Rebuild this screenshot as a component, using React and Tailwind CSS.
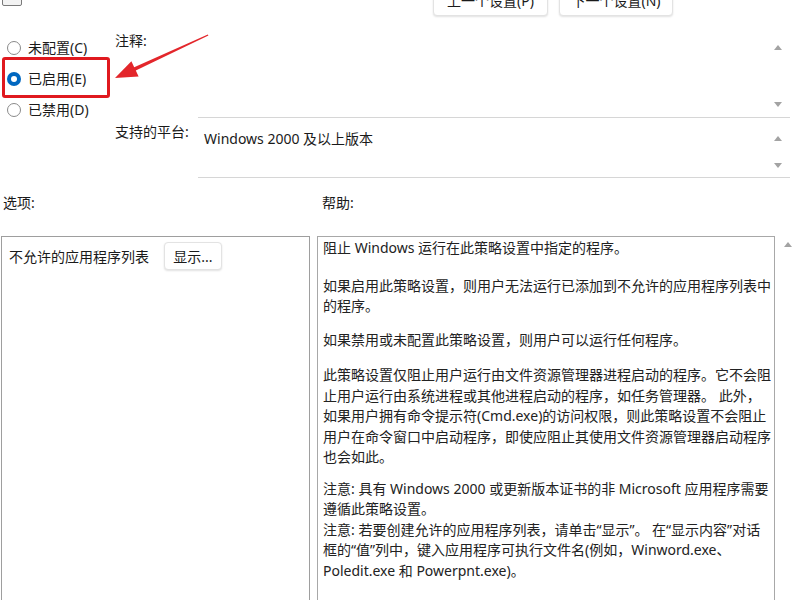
import React from 'react';

const Arrow = ({ down }) => (
  <svg width="8" height="5" viewBox="0 0 8 5" className="block">
    {down ? (
      <polygon points="0,0 8,0 4,5" fill="#a3a3a3" />
    ) : (
      <polygon points="0,5 8,5 4,0" fill="#a3a3a3" />
    )}
  </svg>
);

const Radio = ({ checked, label }) => (
  <div className="h-[31px] flex items-center pl-[7px] gap-[7px]">
    {checked ? (
      <span className="w-[14px] h-[14px] rounded-full bg-[#0067c0] flex items-center justify-center">
        <span className="w-[6px] h-[6px] rounded-full bg-white" />
      </span>
    ) : (
      <span className="w-[14px] h-[14px] rounded-full border border-[#8a8a8a] bg-white" />
    )}
    <span>{label}</span>
  </div>
);

// help text, line by line so the wrap matches the dialog
const helpParagraphs = [
  { mt: 'mt-0', lines: ['阻止 Windows 运行在此策略设置中指定的程序。'] },
  {
    mt: 'mt-[17px]',
    lines: ['如果启用此策略设置，则用户无法运行已添加到不允许的应用程序列表中', '的程序。'],
  },
  { mt: 'mt-[13px]', lines: ['如果禁用或未配置此策略设置，则用户可以运行任何程序。'] },
  {
    mt: 'mt-[15px]',
    lines: [
      '此策略设置仅阻止用户运行由文件资源管理器进程启动的程序。它不会阻',
      '止用户运行由系统进程或其他进程启动的程序，如任务管理器。 此外，',
      '如果用户拥有命令提示符(Cmd.exe)的访问权限，则此策略设置不会阻止',
      '用户在命令窗口中启动程序，即使应阻止其使用文件资源管理器启动程序',
      '也会如此。',
    ],
  },
  {
    mt: 'mt-[11px]',
    lines: ['注意: 具有 Windows 2000 或更新版本证书的非 Microsoft 应用程序需要', '遵循此策略设置。'],
  },
  {
    mt: 'mt-0',
    lines: [
      '注意: 若要创建允许的应用程序列表，请单击“显示”。 在“显示内容”对话',
      '框的“值”列中，键入应用程序可执行文件名(例如，Winword.exe、',
      'Poledit.exe 和 Powerpnt.exe)。',
    ],
  },
];

export default function App() {
  return (
    <div className="w-[800px] h-[600px] overflow-hidden bg-white relative flex flex-col font-['Noto_Sans','Noto_Sans_CJK_SC',sans-serif] text-[14px] text-[#1a1a1a]">
      {/* top strip, cut off by the window edge */}
      <div className="h-[25px] shrink-0 flex items-start">
        <div className="ml-[2px] -mt-[10px] w-[20px] h-[16px] border border-[#7a7a7a] rounded-[2px] bg-[#f3f3f3]" />
        <div className="ml-[411px] -mt-[16px] flex gap-[11px]">
          <button className="w-[115px] h-[32px] bg-white border border-[#e3e3e3] rounded-[4px] shadow-[0_1px_2px_rgba(0,0,0,0.12)] leading-[32px]">
            上一个设置(P)
          </button>
          <button className="w-[114px] h-[32px] bg-white border border-[#e3e3e3] rounded-[4px] shadow-[0_1px_2px_rgba(0,0,0,0.12)] leading-[32px]">
            下一个设置(N)
          </button>
        </div>
      </div>

      {/* state + comment + platform */}
      <div className="h-[155px] shrink-0 flex">
        <div className="w-[113px] pt-[7px] flex flex-col">
          <Radio label="未配置(C)" />
          <Radio checked label="已启用(E)" />
          <Radio label="已禁用(D)" />
        </div>
        <div className="flex-1 pr-[10px] flex flex-col">
          <div className="h-[93px] flex">
            <div className="w-[85px] pl-[2px] pt-[5px]">注释:</div>
            <div className="flex-1 border-b border-[#d6d6d6] flex flex-col items-end justify-between pr-[8px] pt-[20px] pb-[10px]">
              <Arrow />
              <Arrow down />
            </div>
          </div>
          <div className="h-[60px] flex">
            <div className="w-[85px] pl-[2px] pt-[3px]">支持的平台:</div>
            <div className="flex-1 border-b border-[#d6d6d6] flex">
              <div className="flex-1 pl-[6px] pt-[10px]">Windows 2000 及以上版本</div>
              <div className="flex flex-col items-end justify-between pr-[8px] pt-[18px] pb-[9px]">
                <Arrow />
                <Arrow down />
              </div>
            </div>
          </div>
        </div>
      </div>

      {/* section labels */}
      <div className="h-[56px] shrink-0 flex">
        <div className="w-[319px] pl-[3px] pt-[12px]">选项:</div>
        <div className="pl-[3px] pt-[12px]">帮助:</div>
      </div>

      {/* options + help */}
      <div className="flex-1 flex">
        <div className="ml-[1px] w-[309px] h-[420px] border border-[#9e9e9e] pt-[5px] pl-[7px]">
          <div className="flex items-center">
            <span>不允许的应用程序列表</span>
            <button className="ml-[15px] w-[58px] h-[28px] bg-white border border-[#e3e3e3] rounded-[4px] shadow-[0_1px_2px_rgba(0,0,0,0.12)]">
              显示...
            </button>
          </div>
        </div>
        <div className="ml-[7px] w-[458px] h-[420px] border border-[#a8a8a8] pl-[5px] pt-[1px] overflow-hidden text-[#222]">
          {helpParagraphs.map((p, i) => (
            <div key={i} className={p.mt}>
              {p.lines.map((line, j) => (
                <div key={j} className="leading-[20.5px] whitespace-nowrap">
                  {line}
                </div>
              ))}
            </div>
          ))}
        </div>
        <div className="flex-1 flex justify-center pt-[6px]">
          <Arrow />
        </div>
      </div>

      {/* red annotation over the radio group */}
      <div className="absolute left-[2px] top-[57px] w-[108px] h-[41px] border-[3px] border-[#e0191f] rounded-[3px]" />
      <svg className="absolute left-0 top-0" width="220" height="100" viewBox="0 0 220 100">
        <polygon
          points="207.8,34.5 208.4,35.6 135.8,70.4 138.6,76.4 115,78 131.4,61.2 134.2,67.2"
          fill="#e3262b"
        />
      </svg>
    </div>
  );
}
